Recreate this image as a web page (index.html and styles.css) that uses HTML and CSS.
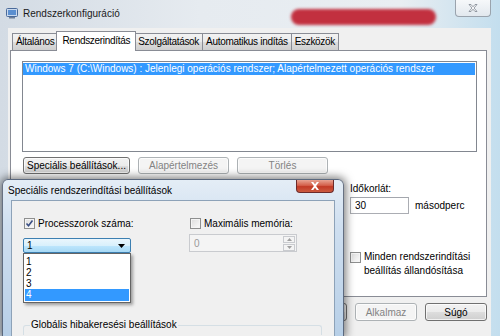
FILE: index.html
```html
<!DOCTYPE html>
<html lang="hu">
<head>
    <meta charset="UTF-8">
    <title>Rendszerkonfiguráció</title>
    <link rel="stylesheet" href="styles.css">
</head>
<body>
    <div class="window">
        <div class="titlebar">
            <svg class="app-icon" width="12" height="11" viewBox="0 0 12 11">
                <rect x="0.5" y="0.5" width="11" height="8" rx="1" fill="#c9d9ee" stroke="#4a6a9a"/>
                <rect x="2" y="2" width="8" height="5" fill="#5b8fd0"/>
                <rect x="3" y="9" width="6" height="1.5" fill="#6d7f99"/>
            </svg>
            <span class="title">Rendszerkonfiguráció</span>
            <span class="behind-glass"></span>
            <div class="close-inactive">
                <svg width="10" height="9" viewBox="0 0 10 9">
                    <path d="M1 0.5h2l2 2.3 2-2.3h2l-3 3.5 3 3.5h-2l-2-2.3-2 2.3h-2l3-3.5z" fill="#fff" stroke="#7d8590" stroke-width="0.8"/>
                </svg>
            </div>
        </div>
        <div class="client">
            <div class="tabs">
                <div class="tab">Általános</div>
                <div class="tab active">Rendszerindítás</div>
                <div class="tab">Szolgáltatások</div>
                <div class="tab">Automatikus indítás</div>
                <div class="tab">Eszközök</div>
            </div>
            <div class="panel">
                <div class="listbox">
                    <div class="list-item selected">Windows 7 (C:\Windows) : Jelenlegi operációs rendszer; Alapértelmezett operációs rendszer</div>
                </div>
                <div class="button-row">
                    <button class="btn btn-wide">Speciális beállítások...</button>
                    <button class="btn btn-mid" disabled>Alapértelmezés</button>
                    <button class="btn btn-mid" disabled>Törlés</button>
                </div>
                <div class="options">
                    <div class="boot-options"></div>
                    <div class="timeout">
                        <div class="label">Időkorlát:</div>
                        <div class="timeout-row">
                            <div class="textbox">30</div>
                            <span>másodperc</span>
                        </div>
                        <div class="check check-permanent">
                            <span class="box"></span>
                            <span>Minden rendszerindítási<br>beállítás állandósítása</span>
                        </div>
                    </div>
                </div>
            </div>
            <div class="footer">
                <button class="btn btn-foot">OK</button>
                <button class="btn btn-foot">Mégse</button>
                <button class="btn btn-foot" disabled>Alkalmaz</button>
                <button class="btn btn-foot">Súgó</button>
            </div>
        </div>
    </div>

    <div class="dialog">
        <div class="dialog-title">
            <span>Speciális rendszerindítási beállítások</span>
            <div class="close-active">
                <svg width="10" height="8" viewBox="0 0 10 8">
                    <path d="M1 0h2.2l1.8 2.2 1.8-2.2h2.2l-2.9 4 2.9 4h-2.2l-1.8-2.2-1.8 2.2h-2.2l2.9-4z" fill="#fff"/>
                </svg>
            </div>
        </div>
        <div class="dialog-client">
            <div class="dialog-grid">
                <div class="col">
                    <div class="check">
                        <span class="box checked">
                            <svg width="9" height="9" viewBox="0 0 9 9"><path d="M1.5 4.5l2 2.2 4-5.2" fill="none" stroke="#3a4f84" stroke-width="1.6"/></svg>
                        </span>
                        <span>Processzorok száma:</span>
                    </div>
                    <div class="combo">
                        <span>1</span>
                        <svg width="7" height="4" viewBox="0 0 7 4"><path d="M0 0h7l-3.5 4z" fill="#000"/></svg>
                        <div class="dropdown">
                            <div class="drop-item">1</div>
                            <div class="drop-item">2</div>
                            <div class="drop-item">3</div>
                            <div class="drop-item selected">4</div>
                        </div>
                    </div>
                </div>
                <div class="col">
                    <div class="check">
                        <span class="box"></span>
                        <span>Maximális memória:</span>
                    </div>
                    <div class="spin">
                        <span>0</span>
                        <div class="spin-buttons">
                            <div class="spin-btn"><svg width="5" height="3" viewBox="0 0 5 3"><path d="M0 3l2.5-3 2.5 3z" fill="#a0a0a0"/></svg></div>
                            <div class="spin-btn"><svg width="5" height="3" viewBox="0 0 5 3"><path d="M0 0l2.5 3 2.5-3z" fill="#a0a0a0"/></svg></div>
                        </div>
                    </div>
                </div>
            </div>
            <div class="groupbox">
                <span class="legend">Globális hibakeresési beállítások</span>
            </div>
        </div>
    </div>
</body>
</html>
```

FILE: styles.css
```css
body {
    margin: 0;
    width: 500px;
    height: 336px;
    overflow: hidden;
    font-family: "Liberation Sans", Arial, sans-serif;
    font-size: 10px;
    color: #000;
    background: linear-gradient(90deg, #d3dbe4 0, #e6ebf0 40%, #e9eef2 80%, #c3deee 100%);
}
.window {
    padding: 0 9px 0 8px;
}
.titlebar {
    height: 28px;
    display: flex;
    align-items: center;
    margin-left: -2px;
}
.app-icon {
    margin-right: 5px;
    margin-top: -2px;
}
.title {
    width: 268px;
    margin-top: -2px;
    color: #1a1a1a;
}
.behind-glass {
    width: 145px;
    height: 16px;
    margin-top: 5px;
    border-radius: 8px;
    background: #c2303f;
    filter: blur(1.5px);
}
.close-inactive {
    margin-left: auto;
    align-self: flex-start;
    width: 36px;
    height: 17px;
    box-sizing: border-box;
    border: 1px solid #9aa3ad;
    border-top: none;
    border-radius: 0 0 4px 4px;
    background: linear-gradient(#f6f8fa, #e2e8ee);
    display: flex;
    align-items: center;
    justify-content: center;
}
.client {
    background: #f0f0f0;
    padding: 3px 4px 0 2px;
    height: 305px;
}
.tabs {
    display: flex;
    align-items: flex-end;
    height: 19px;
    padding-left: 2px;
}
.tab {
    height: 17px;
    line-height: 16px;
    padding: 0 3px;
    letter-spacing: -0.3px;
    box-sizing: border-box;
    border: 1px solid #898c95;
    border-bottom: none;
    border-left: none;
    background: linear-gradient(#f2f2f2, #ebebeb 50%, #dddddd 51%, #cfcfcf);
    color: #000;
}
.tab:first-child {
    border-left: 1px solid #898c95;
}
.tab.active {
    height: 20px;
    margin: 0 -1px -1px -2px;
    padding: 0 5px;
    border-left: 1px solid #898c95;
    background: #fff;
    position: relative;
    z-index: 1;
    line-height: 17px;
}
.panel {
    height: 247px;
    box-sizing: border-box;
    border: 1px solid #898c95;
    background: #fff;
    padding: 10px 9px 0 11px;
}
.listbox {
    height: 91px;
    box-sizing: border-box;
    border: 1px solid #828790;
    padding: 1px 1px 0 0;
}
.list-item {
    height: 12px;
    line-height: 12px;
    padding-left: 2px;
    white-space: nowrap;
    overflow: hidden;
}
.list-item.selected {
    background: #3399ff;
    color: #fff;
}
.button-row {
    display: flex;
    gap: 8px;
    margin-top: 5px;
    padding-left: 1px;
}
.btn {
    height: 17px;
    padding: 0;
    font-family: inherit;
    font-size: 10px;
    color: #000;
    border: 1px solid #707070;
    border-radius: 3px;
    background: linear-gradient(#f2f2f2, #ebebeb 50%, #dddddd 51%, #cfcfcf);
    box-shadow: inset 0 0 0 1px rgba(255, 255, 255, 0.7);
}
.btn:disabled {
    color: #838383;
    border-color: #adb2b5;
    background: #f4f4f4;
}
.btn-wide {
    width: 107px;
}
.btn-mid {
    width: 91px;
}
.options {
    display: flex;
    gap: 12px;
    margin-top: 9px;
}
.boot-options {
    width: 316px;
}
.label {
    line-height: 12px;
}
.timeout-row {
    display: flex;
    align-items: center;
    gap: 6px;
    margin-top: 2px;
}
.textbox {
    width: 59px;
    height: 17px;
    box-sizing: border-box;
    border: 1px solid #abadb3;
    border-top-color: #a3a6ad;
    padding-left: 4px;
    line-height: 15px;
    background: #fff;
}
.check {
    display: flex;
    align-items: flex-start;
    gap: 3px;
    line-height: 12px;
}
.box {
    width: 11px;
    height: 11px;
    box-sizing: border-box;
    border: 1px solid #8e8f8f;
    background: linear-gradient(135deg, #dcdcdc, #fbfbfb);
    box-shadow: inset 0 0 0 1px #f4f4f4;
    display: flex;
    align-items: center;
    justify-content: center;
    flex-shrink: 0;
}
.check-permanent {
    margin-top: 36px;
    line-height: 14px;
}
.check-permanent .box {
    margin-top: 2px;
}
.footer {
    display: flex;
    justify-content: flex-end;
    gap: 8px;
    margin-top: 6px;
}
.btn-foot {
    width: 62px;
    height: 18px;
}
.dialog {
    position: absolute;
    left: 2px;
    top: 179px;
    width: 342px;
    height: 157px;
    box-sizing: border-box;
    padding: 0 8px;
    border: 1px solid rgba(40, 50, 70, 0.65);
    border-bottom: none;
    border-radius: 6px 6px 0 0;
    background: linear-gradient(#e4edf6, #cfdff0 30%, #b7cfe7);
    box-shadow: 0 0 9px 2px rgba(0, 0, 0, 0.5);
}
.dialog-title {
    height: 20px;
    display: flex;
    align-items: flex-start;
}
.dialog-title span {
    line-height: 21px;
    margin-left: -3px;
    color: #000;
}
.close-active {
    margin-left: auto;
    margin-right: 1px;
    width: 38px;
    height: 13px;
    box-sizing: border-box;
    border: 1px solid #6c2a2a;
    border-top: none;
    border-radius: 0 0 4px 4px;
    background: linear-gradient(#e8a493, #d4604b 45%, #c23a26 55%, #cc5b40);
    display: flex;
    align-items: center;
    justify-content: center;
}
.dialog-client {
    height: 119px;
    border: 1px solid #8da2b8;
    border-bottom: none;
    background: #f0f0f0;
    padding: 17px 0 0 11px;
}
.dialog-grid {
    display: grid;
    grid-template-columns: 166px 108px;
}
.col .check {
    height: 13px;
    padding-left: 1px;
}
.combo {
    position: relative;
    margin-top: 7px;
    width: 108px;
    height: 15px;
    box-sizing: border-box;
    border: 1px solid #3c7fb1;
    border-radius: 2px;
    background: linear-gradient(#eaf6fd, #d9f0fc 50%, #bee6fd 51%, #a7d9f5);
    display: flex;
    align-items: center;
    justify-content: space-between;
    padding: 0 5px 0 3px;
}
.dropdown {
    position: absolute;
    left: -1px;
    top: 14px;
    width: 108px;
    box-sizing: border-box;
    border: 1px solid #646464;
    background: #fff;
    padding: 1px;
    box-shadow: 2px 2px 3px rgba(0, 0, 0, 0.35);
}
.drop-item {
    height: 11px;
    line-height: 11px;
    padding-left: 1px;
}
.drop-item:first-child {
    margin-top: 1px;
}
.drop-item.selected {
    background: #3399ff;
    color: #fff;
    height: 12px;
}
.spin {
    margin-top: 3px;
    width: 108px;
    height: 18px;
    box-sizing: border-box;
    border: 1px solid #c9cbcf;
    background: #f4f4f4;
    color: #9a9a9a;
    display: flex;
    align-items: center;
    justify-content: space-between;
    padding-left: 4px;
}
.spin-buttons {
    display: flex;
    flex-direction: column;
    gap: 1px;
    margin-right: 1px;
}
.spin-btn {
    width: 12px;
    height: 7px;
    box-sizing: border-box;
    border: 1px solid #c9cbcf;
    background: #f4f4f4;
    display: flex;
    align-items: center;
    justify-content: center;
}
.groupbox {
    margin: 72px 12px 0 0;
    height: 10px;
    box-sizing: border-box;
    border: 1px solid #d5dfe5;
    border-bottom: none;
    border-radius: 3px 3px 0 0;
}
.legend {
    display: inline-block;
    position: relative;
    top: -7px;
    margin-left: 6px;
    padding: 0 1px;
    line-height: 12px;
    background: #f0f0f0;
}
```
